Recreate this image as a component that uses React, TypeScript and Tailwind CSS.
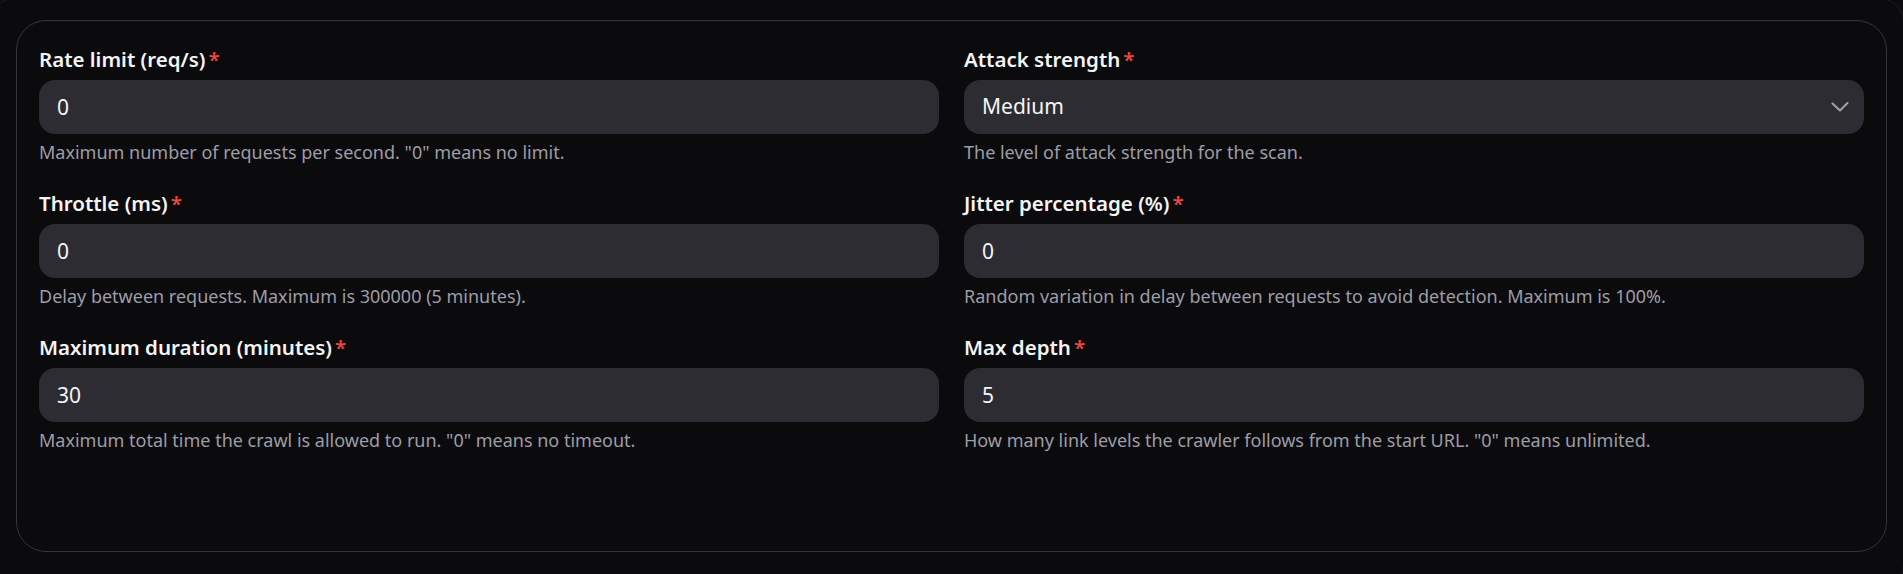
import React from "react";

type Field = {
    key: string;
    label: string;
    value: string;
    hint: string;
    select?: boolean;
};

const fields: Field[] = [
    { key: "rate", label: "Rate limit (req/s)", value: "0", hint: 'Maximum number of requests per second. "0" means no limit.' },
    { key: "strength", label: "Attack strength", value: "Medium", hint: "The level of attack strength for the scan.", select: true },
    { key: "throttle", label: "Throttle (ms)", value: "0", hint: "Delay between requests. Maximum is 300000 (5 minutes)." },
    { key: "jitter", label: "Jitter percentage (%)", value: "0", hint: "Random variation in delay between requests to avoid detection. Maximum is 100%." },
    { key: "duration", label: "Maximum duration (minutes)", value: "30", hint: 'Maximum total time the crawl is allowed to run. "0" means no timeout.' },
    { key: "depth", label: "Max depth", value: "5", hint: 'How many link levels the crawler follows from the start URL. "0" means unlimited.' },
];

const ChevronDown = () => (
    <svg width="18" height="10" viewBox="0 0 18 10" fill="none">
        <path d="M1.5 1.5 9 8.5l7.5-7.5" stroke="#a1a1aa" strokeWidth="2" strokeLinecap="round" strokeLinejoin="round" />
    </svg>
);

const FormField = ({ field }: { field: Field }) => {
    return (
        <div className="flex flex-col">
            <label className="flex items-center text-[20.5px] leading-[28px] font-semibold text-[#f4f4f5]">
                {field.label}
                <span className="ml-[3px] text-[#ef4444]">*</span>
            </label>
            {field.select ? (
                <button
                    type="button"
                    className="mt-[7px] flex h-[54px] w-full items-center justify-between rounded-[16px] bg-[#2e2c33] pl-[18px] pr-[15px] text-left text-[21px] text-[#f4f4f5]"
                >
                    <span>{field.value}</span>
                    <ChevronDown />
                </button>
            ) : (
                <input
                    type="text"
                    readOnly
                    value={field.value}
                    className="mt-[7px] h-[54px] w-full rounded-[16px] bg-[#2e2c33] px-[18px] text-[21px] text-[#f4f4f5] outline-none"
                />
            )}
            <p className="mt-[6px] text-[18px] leading-[24px] text-[#9d9da5]">{field.hint}</p>
        </div>
    );
};

export default function App() {
    return (
        <div className="h-[574px] w-full overflow-hidden bg-[#0b0b0e] font-['Noto_Sans',sans-serif]">
            <div className="-mt-[2px] -ml-[10px] -mr-[1px] h-[590px] rounded-[24px] border border-[#1c1c20] pt-[21px] pl-[25px] pr-[16px]">
                <div className="h-[532px] rounded-[30px] border border-[#34343a] bg-[#0b0b0e] px-[22px] pt-[24px] shadow-[inset_0_1px_0_rgba(255,255,255,0.03)]">
                    <div className="grid grid-cols-2 gap-x-[25px] gap-y-[25px]">
                        {fields.map((field) => (
                            <FormField key={field.key} field={field} />
                        ))}
                    </div>
                </div>
            </div>
        </div>
    );
}
